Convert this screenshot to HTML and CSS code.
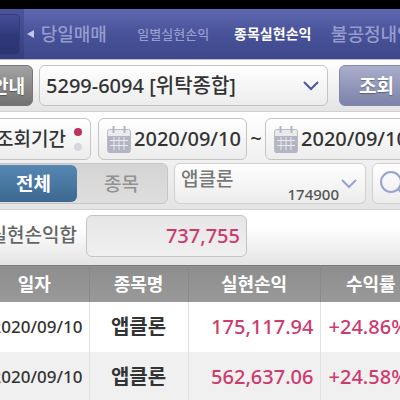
FILE: index.html
```
<!DOCTYPE html>
<html lang="ko">
<head>
<meta charset="utf-8">
<meta name="viewport" content="width=device-width, initial-scale=1">
<title>종목실현손익</title>
<link rel="stylesheet" href="styles.css">
</head>
<body>
<div class="sheet">
  <header class="top">
    <div class="menu-slot"><button class="menu" type="button" aria-label="메뉴"></button></div>
    <nav class="tabs">
      <svg class="prev" viewBox="0 0 7 8" aria-hidden="true"><path d="M7 0v8L0 4z"/></svg>
      <a class="tab" href="#">당일매매</a>
      <a class="tab tab-narrow" href="#">일별실현손익</a>
      <a class="tab tab-narrow tab-active" href="#" aria-current="page">종목실현손익</a>
      <a class="tab" href="#">불공정내역</a>
    </nav>
  </header>

  <main>
    <form class="filters">
      <div class="row row-account">
        <button class="btn btn-info" type="button">안내</button>
        <div class="pick pick-account">
          <select class="box" aria-label="계좌"><option>5299-6094 [위탁종합]</option></select>
          <svg class="chevron" viewBox="0 0 16 10" aria-hidden="true"><path d="M1 1l7 7 7-7"/></svg>
        </div>
        <button class="btn btn-search" type="button">조회</button>
      </div>

      <div class="row row-period">
        <button class="box period" type="button">조회기간<span class="dots"><i class="dot dot-on"></i><i class="dot"></i></span></button>
        <button class="box date" type="button">
          <svg class="calendar" viewBox="0 0 24 27" aria-hidden="true"><rect x=".5" y="3.500" width="23" height="23" rx="2" fill="#e9e9ee" stroke="#b9bac5"/><path d="M1 10h22v15a2 2 0 0 1-2 2H3a2 2 0 0 1-2-2z" fill="#b4b5c2"/><path d="M6.500 0v7M17.500 0v7" stroke="#b4b5c2" stroke-width="2"/><path d="M3 14.500h18M3 19.500h18M7 11v13M12 11v13M17 11v13" stroke="#e9e9ee"/></svg>
          2020/09/10
        </button>
        <span class="tilde">~</span>
        <button class="box date date-end" type="button">
          <svg class="calendar" viewBox="0 0 24 27" aria-hidden="true"><rect x=".5" y="3.500" width="23" height="23" rx="2" fill="#e9e9ee" stroke="#b9bac5"/><path d="M1 10h22v15a2 2 0 0 1-2 2H3a2 2 0 0 1-2-2z" fill="#b4b5c2"/><path d="M6.500 0v7M17.500 0v7" stroke="#b4b5c2" stroke-width="2"/><path d="M3 14.500h18M3 19.500h18M7 11v13M12 11v13M17 11v13" stroke="#e9e9ee"/></svg>
          2020/09/10
        </button>
      </div>

      <div class="row row-stock">
        <div class="segment">
          <button class="seg seg-on" type="button" aria-pressed="true">전체</button>
          <button class="seg" type="button" aria-pressed="false">종목</button>
        </div>
        <div class="pick pick-stock">
          <select class="box" aria-label="종목"><option>앱클론</option></select>
          <span class="code">174900</span>
          <svg class="chevron" viewBox="0 0 16 10" aria-hidden="true"><path d="M1 1l7 7 7-7"/></svg>
        </div>
        <button class="box find" type="button" aria-label="종목 검색">
          <svg viewBox="0 0 28 28" aria-hidden="true"><circle cx="12" cy="12" r="10"/><path d="M19 19l8 8"/></svg>
        </button>
      </div>

      <div class="row row-sum">
        <label class="sum-label" for="sum">실현손익합</label>
        <input class="box sum" id="sum" value="737,755" readonly>
      </div>
    </form>

    <table class="grid">
      <thead>
        <tr><th class="c-date">일자</th><th class="c-name">종목명</th><th class="c-profit">실현손익</th><th>수익률</th></tr>
      </thead>
      <tbody>
        <tr><td class="day">2020/09/10</td><td class="name">앱클론</td><td class="num">175,117.94</td><td class="rate">+24.86%</td></tr>
        <tr><td class="day">2020/09/10</td><td class="name">앱클론</td><td class="num">562,637.06</td><td class="rate">+24.58%</td></tr>
      </tbody>
    </table>
  </main>
</div>
</body>
</html>
```
FILE: styles.css
```
* { box-sizing: border-box; }

body {
  margin: 0;
  overflow: hidden;
  background: #fff;
  color: #333;
  font: 500 20px/24px "Noto Sans", "Noto Sans CJK KR", sans-serif;
}

button, input, select { font: inherit; color: inherit; margin: 0; }

/* The sheet is wider than the window and runs off both sides. */
.sheet { margin: 0 -22px 0 -20px; }

.top {
  display: flex;
  height: 60px;
  border-top: 9px solid #000;
  border-bottom: 1px solid #b9bce0;
  background: linear-gradient(#5e68b0, #4a549b 45%, #3d4788);
}
.menu-slot {
  flex: 0 0 44px;
  padding: 5px 4px 4px 0;
  background: linear-gradient(#4b559c, #353e7c);
}
.menu {
  width: 100%;
  height: 100%;
  border: 1px solid #333c7c;
  border-radius: 4px;
  background: linear-gradient(#454f98, #2f397a 50%, #2b3473);
}
.tabs {
  position: relative;
  flex: 1;
  display: grid;
  grid-template-columns: repeat(4, 1fr);
  align-items: center;
  text-align: center;
}
.prev { position: absolute; left: 3px; top: 21px; width: 7px; height: 8px; fill: #c3c7e6; }
.tab { color: #969dce; font-size: 18px; text-decoration: none; white-space: nowrap; }
.tab-narrow { font-size: 13px; }
.tab-active { color: #fff; font-size: 14px; font-weight: 700; }

.row { display: flex; align-items: stretch; }
.row-account {
  height: 52px;
  padding: 5px 0;
  background: linear-gradient(#fff, #e4e4e4);
  border-bottom: 1px solid #d2d2d2;
}
.row-period { height: 50px; padding: 6px 0 2px; background: linear-gradient(#fff, #f0f0f0); }
.row-stock {
  height: 48px;
  padding: 1px 0 5px;
  background: linear-gradient(#f0f0f0, #e4e4e4);
  border-bottom: 1px solid #d2d2d2;
}
.row-sum { height: 55px; padding: 5px 0 8px; background: linear-gradient(#fff 30%, #e4e4e4); }

.box {
  border: 1px solid #c4c4c4;
  border-radius: 6px;
  background: linear-gradient(#fff, #ececec);
}
.btn { border-radius: 6px; color: #fff; font-weight: 700; text-shadow: 0 1px 1px #0005; }
.btn-info {
  width: 53px;
  padding: 0 7px 0 0;
  border: 1px solid #777;
  background: linear-gradient(#a3a3a3, #727272);
  font-size: 18px;
  text-align: right;
}
.btn-search {
  flex: 1;
  padding: 0 8px 0 0;
  border: 1px solid #8288ad;
  background: linear-gradient(#a9aecb, #7c82a8);
  font-size: 19px;
}

.pick { position: relative; }
.pick select { width: 100%; height: 100%; appearance: none; }
.pick-account { width: 289px; margin: 0 11px 0 6px; }
.pick-account select { padding: 0 34px 0 6px; }
.pick-stock { width: 192px; margin: 0 6px; }
.pick-stock select { padding: 0 34px 10px 6px; border-color: #d0d0d0; color: #777; font-size: 19px; }
.chevron {
  position: absolute;
  right: 9px;
  top: 16px;
  width: 16px;
  height: 10px;
  fill: none;
  stroke: #4b569f;
  stroke-width: 2;
  pointer-events: none;
}
.pick-stock .chevron { stroke: #9aa2d0; }
.code {
  position: absolute;
  right: 27px;
  bottom: 0;
  color: #555;
  font-size: 15px;
  line-height: 20px;
  pointer-events: none;
}

.period {
  display: flex;
  align-items: center;
  justify-content: flex-end;
  gap: 8px;
  width: 111px;
  margin-right: 7px;
  padding: 0 8px 0 0;
  font-size: 19px;
  white-space: nowrap;
}
.dots { display: grid; gap: 7px; }
.dot { width: 8px; height: 8px; border-radius: 50%; background: #d5d7e4; }
.dot-on { background: #c0305f; }
.date {
  display: flex;
  align-items: center;
  gap: 3px;
  width: 149px;
  padding: 0 0 0 8px;
  white-space: nowrap;
}
.date-end { flex: 1; }
.calendar { flex: none; width: 24px; height: 27px; }
.tilde { width: 18px; line-height: 42px; text-align: center; }

.segment {
  display: flex;
  width: 188px;
  padding: 1px;
  border: 1px solid #c6c6c6;
  border-radius: 6px;
  background: linear-gradient(#d4d4d4, #dedede);
}
.seg { flex: 1; padding: 0; border: 0; border-radius: 6px; background: none; color: #929292; font-size: 19px; }
.seg-on {
  flex: 0 0 95px;
  padding-left: 8px;
  background: linear-gradient(#5688b3, #3c6890);
  color: #fff;
  font-weight: 700;
}
.find { flex: 1; padding: 0 0 0 6px; border-color: #d0d0d0; text-align: left; }
.find svg { display: block; width: 28px; height: 28px; fill: none; stroke: #9aa2d0; stroke-width: 2; }

.sum-label {
  width: 97px;
  margin-right: 9px;
  color: #666;
  font-size: 19px;
  line-height: 40px;
  text-align: right;
  white-space: nowrap;
}
.sum {
  width: 161px;
  padding: 0 6px;
  background: linear-gradient(#e6e6e6, #f0f0f0);
  color: #cf3a6e;
  text-align: right;
}

.grid { width: 100%; table-layout: fixed; border-collapse: collapse; }
.grid th {
  height: 36px;
  padding: 0;
  border-top: 1px solid #787878;
  border-right: 1px solid #898989;
  background: linear-gradient(#8d8d8d, #999);
  color: #fff;
  font-size: 18px;
  font-weight: 700;
}
.c-date { width: 109px; }
.c-name { width: 99px; }
.c-profit { width: 132px; }
.grid td { height: 50px; padding: 0; border-right: 1px solid #e2e2e2; }
.grid tbody tr:nth-child(even) { background: #f0f0f0; }
.grid .day { padding-right: 6px; font-size: 17px; text-align: right; }
.grid .name { font-weight: 700; text-align: center; }
.grid .num { padding-right: 6px; color: #cf3a6e; text-align: right; }
.grid .rate { padding-left: 8px; color: #cf3a6e; }
```
